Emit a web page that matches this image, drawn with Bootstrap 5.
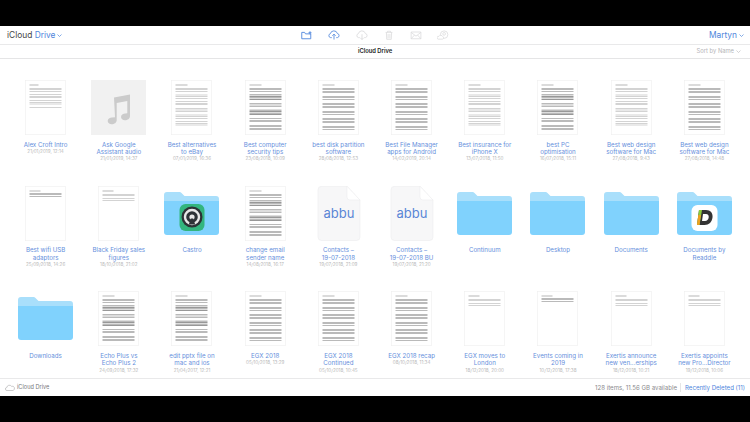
<!DOCTYPE html>
<html lang="en"><head><meta charset="utf-8"><title>iCloud Drive</title>
<link href="https://cdn.jsdelivr.net/npm/bootstrap@5.3.0/dist/css/bootstrap.min.css" rel="stylesheet">
<style>
html,body{height:422px;overflow:hidden;background:#000}
.shell{height:422px;font-family:Inter,"Liberation Sans",sans-serif}
.blackbar{height:26px;flex:none;background:#000}
.app{flex:1;min-height:0;background:#fff}
.topbar{height:19px;flex:none;padding:0 6px 0 7px;border-bottom:1px solid #e9e9ea;font-size:8.4px;color:#444;position:relative}
.bluetx{color:#4f86dc}
.caret{width:5px;height:5px;margin-left:2px}
.tools{gap:15.3px;position:absolute;left:301px;top:4px}
.tools svg{width:12px;height:10px;display:block}
.subbar{height:14px;flex:none;padding:0 9px;border-bottom:1px solid #e5e5e6;font-size:5.8px;position:relative}
.subtitle{font-weight:600;color:#222;position:absolute;left:0;right:0;text-align:center}
.sorter{margin-left:auto;color:#b5b5b8;font-size:5.8px}
.filegrid{flex:1;min-height:0;overflow:hidden;padding:21px 9px 0;display:grid;grid-template-columns:repeat(10,1fr);grid-auto-rows:105.6px}
.fileitem{text-align:center;min-width:0}
.thumb{display:block;width:55px;height:55px;margin:0 auto 5.500px}
.fname{font-size:6.2px;line-height:7.4px;color:#668fdc;padding:0 8.500px}
.fdate{font-size:4.6px;line-height:8px;color:#b8b8b8}
.botbar{height:18px;flex:none;border-top:1px solid #e9e9ea;padding:0 5px;font-size:6.1px;color:#8a8a8d}
.cloudic{width:10px;height:7px;margin-right:2px}
.botname{font-size:5.6px;color:#77777a}
.sep{width:1px;height:9px;background:#e5e5e6;margin:0 4px 0 3px}
.ln{fill:none;stroke:#777;stroke-width:32}
.pgbg{fill:#fff;stroke:#efefef;stroke-width:.6}
.hd{fill:none;stroke:#999;stroke-width:.7}
.lo{stroke:#a8a8a8}
.abbu{font:13px Inter,"Liberation Sans",sans-serif;fill:#5a86d6;text-anchor:middle}
</style></head>
<body>
<svg width="0" height="0" class="position-absolute">
<defs>
<symbol id="pgA" viewBox="0 0 55 55"><rect class="pgbg" x="7.500" y=".3" width="40" height="54.400"/><path class="hd" d="M11.500 5h9"/><path class="ln lo" d="M27.500 8V28" stroke-dasharray=".5 1.100 .5 1.100 .5 2.600"/></symbol>
<symbol id="pgB" viewBox="0 0 55 55"><rect class="pgbg" x="7.500" y=".3" width="40" height="54.400"/><path class="hd" d="M11.500 5h12"/><path class="ln" d="M27.500 8V52" stroke-dasharray=".5 1 .5 1 .5 1 .5 3 .5 1 .5 1 .5 3.500"/></symbol>
<symbol id="pgC" viewBox="0 0 55 55"><rect class="pgbg" x="7.500" y=".3" width="40" height="54.400"/><path class="hd" d="M11.500 5h12"/><path class="ln" d="M27.500 8V50" stroke-dasharray=".6 .9 .6 .9 .6 3 .6 .9 .6 .9 .6 .9 .6 3.500"/></symbol>
<symbol id="pgD" viewBox="0 0 55 55"><rect class="pgbg" x="7.500" y=".3" width="40" height="54.400"/><path class="hd" d="M11.500 5h12"/><path class="ln lo" d="M27.500 8V46" stroke-dasharray=".5 1.100 .5 1.100 .5 3"/></symbol>
<symbol id="pgE" viewBox="0 0 55 55"><rect class="pgbg" x="7.500" y=".3" width="40" height="54.400"/><path class="hd" d="M11.500 5h11"/><path class="ln" d="M27.500 7V11" stroke-dasharray=".5 1"/></symbol>
<symbol id="pgF" viewBox="0 0 55 55"><rect class="pgbg" x="7.500" y=".3" width="40" height="54.400"/><path class="hd" d="M11.500 5h11"/><path class="ln lo" d="M27.500 8V17" stroke-dasharray=".5 1 .5 2.500"/></symbol>
<symbol id="fold" viewBox="0 0 55 43"><path d="M0 3a3 3 0 0 1 3-3h12.500a3 3 0 0 1 2 1l3 3h31.500a3 3 0 0 1 3 3v6H0z" fill="#a9dffb"/><path d="M0 9h55v31a3 3 0 0 1-3 3H3a3 3 0 0 1-3-3z" fill="#80d2fd"/></symbol>
<symbol id="cardfile" viewBox="0 0 55 55"><path d="M10.500.3H36l13 14V51a3.500 3.500 0 0 1-3.500 3.500h-35A3.500 3.500 0 0 1 7 51V3.800A3.500 3.500 0 0 1 10.500.3z" fill="#f7f7f8" stroke="#ececee" stroke-width=".6"/><path d="M36 .3V11a3 3 0 0 0 3 3h10z" fill="#fff" stroke="#ececee" stroke-width=".6"/></symbol>
</defs></svg>

<div class="shell d-flex flex-column">
<div class="blackbar"></div>
<main class="app d-flex flex-column">
<header class="topbar d-flex align-items-center">
<span>iCloud <span class="bluetx">Drive</span></span>
<svg class="caret" viewBox="0 0 5 5"><path d="M.5 1.500 2.500 3.500l2-2" fill="none" stroke="#4f86dc" stroke-width=".7"/></svg>
<div class="tools d-flex">
<svg viewBox="0 0 16 13"><path d="M1 3V11.500h12V5H6L4.800 3zM10 3.500h4M12 1.500v4" fill="none" stroke="#4f86dc" stroke-width="1.200"/></svg>
<svg viewBox="0 0 16 13"><path d="M5 10H3.500a2.700 2.700 0 0 1-.3-5.300A4.800 4.800 0 0 1 12.500 4.500a2.800 2.800 0 0 1 0 5.500H11M8 12.500V5.500M5.800 7.500 8 5.300l2.200 2.200" fill="none" stroke="#4f86dc" stroke-width="1.100"/></svg>
<svg viewBox="0 0 16 13"><path d="M5 10H3.500a2.700 2.700 0 0 1-.3-5.300A4.800 4.800 0 0 1 12.500 4.500a2.800 2.800 0 0 1 0 5.500H11M8 5.500V12.500M5.800 10.300 8 12.500l2.200-2.200" fill="none" stroke="#d9d9db" stroke-width="1.100"/></svg>
<svg viewBox="0 0 16 13"><path d="M3.500 3h9M6 3V1.500h4V3M4.500 3 5 12.300h6L11.500 3M6.800 5v6M9.200 5v6" fill="none" stroke="#d9d9db"/></svg>
<svg viewBox="0 0 16 13"><path d="M1.500 2.500h13v9h-13zM1.500 3 8 8l6.500-5M1.500 11.500 6 6.500M14.500 11.500 10 6.500" fill="none" stroke="#d9d9db"/></svg>
<svg viewBox="0 0 16 13"><circle cx="9.500" cy="6" r="5" fill="none" stroke="#d9d9db"/><circle cx="9.500" cy="5" r="1.800" fill="none" stroke="#d9d9db"/><path d="M1.500 12h6a1.800 1.800 0 0 0 0-3.500 2.800 2.800 0 0 0-5-.2A1.900 1.900 0 0 0 1.500 12z" fill="#fff" stroke="#d9d9db"/></svg>
</div>
<span class="bluetx ms-auto">Martyn</span>
<svg class="caret" viewBox="0 0 5 5"><path d="M.5 1.500 2.500 3.500l2-2" fill="none" stroke="#4f86dc" stroke-width=".7"/></svg>
</header>
<div class="subbar d-flex align-items-center">
<span class="subtitle">iCloud Drive</span>
<span class="sorter">Sort by Name</span>
<svg class="caret" viewBox="0 0 5 5"><path d="M.5 1.500 2.500 3.500l2-2" fill="none" stroke="#b5b5b8" stroke-width=".6"/></svg>
</div>
<section class="filegrid">
<div class="fileitem"><svg class="thumb"><use href="#pgA"/></svg><div class="fname">Alex Croft Intro</div><div class="fdate">21/01/2019, 12:14</div></div>
<div class="fileitem"><svg class="thumb" viewBox="0 0 55 55"><rect width="55" height="55" fill="#f1f1f1"/><path d="M23 17.500 39 14.500V36c0 2.800-2.400 4.200-5 4.200-2.300 0-4-1.200-4-3.100 0-2.200 2.100-3.500 4.300-3.500l2-.3V21l-10.600 2V40c0 2.800-2.400 4.200-5 4.200-2.300 0-4-1.200-4-3.100 0-2.200 2.100-3.500 4.300-3.500l3-.4z" fill="#cbcbcb"/></svg><div class="fname">Ask Google<br>Assistant audio</div><div class="fdate">21/01/2019, 14:37</div></div>
<div class="fileitem"><svg class="thumb"><use href="#pgD"/></svg><div class="fname">Best alternatives<br>to eBay</div><div class="fdate">07/01/2019, 16:36</div></div>
<div class="fileitem"><svg class="thumb"><use href="#pgC"/></svg><div class="fname">Best computer security tips</div><div class="fdate">23/08/2018, 10:09</div></div>
<div class="fileitem"><svg class="thumb"><use href="#pgB"/></svg><div class="fname">best disk partition software</div><div class="fdate">28/08/2018, 12:53</div></div>
<div class="fileitem"><svg class="thumb"><use href="#pgB"/></svg><div class="fname">Best File Manager apps for Android</div><div class="fdate">14/02/2019, 20:14</div></div>
<div class="fileitem"><svg class="thumb"><use href="#pgD"/></svg><div class="fname">Best insurance for iPhone X</div><div class="fdate">13/07/2018, 11:50</div></div>
<div class="fileitem"><svg class="thumb"><use href="#pgC"/></svg><div class="fname">best PC optimisation</div><div class="fdate">16/07/2018, 15:11</div></div>
<div class="fileitem"><svg class="thumb"><use href="#pgD"/></svg><div class="fname">Best web design software for Mac</div><div class="fdate">27/08/2018, 9:43</div></div>
<div class="fileitem"><svg class="thumb"><use href="#pgB"/></svg><div class="fname">Best web design software for Mac</div><div class="fdate">27/08/2018, 14:48</div></div>

<div class="fileitem"><svg class="thumb"><use href="#pgE"/></svg><div class="fname">Best wifi USB adaptors</div><div class="fdate">25/09/2018, 14:26</div></div>
<div class="fileitem"><svg class="thumb"><use href="#pgF"/></svg><div class="fname">Black Friday sales figures</div><div class="fdate">18/10/2018, 21:02</div></div>
<div class="fileitem"><svg class="thumb" viewBox="0 0 55 55"><use href="#fold" x="0" y="6" width="55" height="43"/><rect x="15.500" y="18" width="25" height="27" rx="6" fill="#33b57e"/><circle cx="28" cy="31" r="10.500" fill="#2d3236"/><circle cx="28" cy="31" r="7" fill="none" stroke="#e8e8e8" stroke-width="2.400"/><circle cx="28" cy="31" r="2.600" fill="#e8e8e8"/><path d="M24.800 38.500 26.800 32.500h2.400l2 6z" fill="#2d3236"/></svg><div class="fname">Castro</div></div>
<div class="fileitem"><svg class="thumb"><use href="#pgC"/></svg><div class="fname">change email sender name</div><div class="fdate">14/08/2018, 16:17</div></div>
<div class="fileitem"><svg class="thumb" viewBox="0 0 55 55"><use href="#cardfile"/><text class="abbu" x="28" y="32">abbu</text></svg><div class="fname">Contacts –<br>19-07-2018</div><div class="fdate">19/07/2018, 21:09</div></div>
<div class="fileitem"><svg class="thumb" viewBox="0 0 55 55"><use href="#cardfile"/><text class="abbu" x="28" y="32">abbu</text></svg><div class="fname">Contacts –<br>19-07-2018 BU</div><div class="fdate">19/07/2018, 21:20</div></div>
<div class="fileitem"><svg class="thumb" viewBox="0 0 55 55"><use href="#fold" x="0" y="6" width="55" height="43"/></svg><div class="fname">Continuum</div></div>
<div class="fileitem"><svg class="thumb" viewBox="0 0 55 55"><use href="#fold" x="0" y="6" width="55" height="43"/></svg><div class="fname">Desktop</div></div>
<div class="fileitem"><svg class="thumb" viewBox="0 0 55 55"><use href="#fold" x="0" y="6" width="55" height="43"/></svg><div class="fname">Documents</div></div>
<div class="fileitem"><svg class="thumb" viewBox="0 0 55 55"><use href="#fold" x="0" y="6" width="55" height="43"/><rect x="14.500" y="19" width="26" height="26" rx="6" fill="#fff"/><path d="M22 24h7c4.500 0 7 3 6.500 7.500-.5 4.500-3.500 7.500-8 7.500H20z" fill="#333"/><path d="M26 28h3c2 0 3 1.300 2.700 3.500-.3 2.300-1.700 3.500-3.700 3.500h-3z" fill="#fff"/><path d="M22 24h3L22.500 39H20z" fill="#8ccb3a"/><path d="M21.300 29h2.500L22.500 39H20z" fill="#f0a020"/></svg><div class="fname">Documents by Readdle</div></div>

<div class="fileitem"><svg class="thumb" viewBox="0 0 55 55"><use href="#fold" x="0" y="6" width="55" height="43"/></svg><div class="fname">Downloads</div></div>
<div class="fileitem"><svg class="thumb"><use href="#pgC"/></svg><div class="fname">Echo Plus vs<br>Echo Plus 2</div><div class="fdate">24/09/2018, 17:32</div></div>
<div class="fileitem"><svg class="thumb"><use href="#pgC"/></svg><div class="fname">edit pptx file on mac and ios</div><div class="fdate">21/04/2017, 12:21</div></div>
<div class="fileitem"><svg class="thumb"><use href="#pgB"/></svg><div class="fname">EGX 2018</div><div class="fdate">05/10/2018, 13:29</div></div>
<div class="fileitem"><svg class="thumb"><use href="#pgB"/></svg><div class="fname">EGX 2018 Continued</div><div class="fdate">05/10/2018, 10:45</div></div>
<div class="fileitem"><svg class="thumb"><use href="#pgB"/></svg><div class="fname">EGX 2018 recap</div><div class="fdate">08/10/2018, 11:34</div></div>
<div class="fileitem"><svg class="thumb"><use href="#pgF"/></svg><div class="fname">EGX moves to London</div><div class="fdate">18/12/2018, 20:00</div></div>
<div class="fileitem"><svg class="thumb"><use href="#pgE"/></svg><div class="fname">Events coming in 2019</div><div class="fdate">10/12/2018, 17:38</div></div>
<div class="fileitem"><svg class="thumb"><use href="#pgF"/></svg><div class="fname">Exertis announce<br>new ven...erships</div><div class="fdate">18/12/2018, 10:21</div></div>
<div class="fileitem"><svg class="thumb"><use href="#pgF"/></svg><div class="fname">Exertis appoints<br>new Pro...Director</div><div class="fdate">19/12/2018, 10:06</div></div>
</section>
<footer class="botbar d-flex align-items-center">
<svg class="cloudic" viewBox="0 0 10 7"><path d="M2 6.500a1.500 1.500 0 0 1-.2-3A2.600 2.600 0 0 1 6.500 2.300 2 2 0 0 1 8 6.500z" fill="none" stroke="#9a9a9d" stroke-width=".5"/></svg>
<span class="botname">iCloud Drive</span>
<span class="ms-auto">128 items, 11.56 GB available</span>
<span class="sep"></span>
<span class="bluetx">Recently Deleted (11)</span>
</footer>
</main>
<div class="blackbar"></div>
</div>
</body></html>
